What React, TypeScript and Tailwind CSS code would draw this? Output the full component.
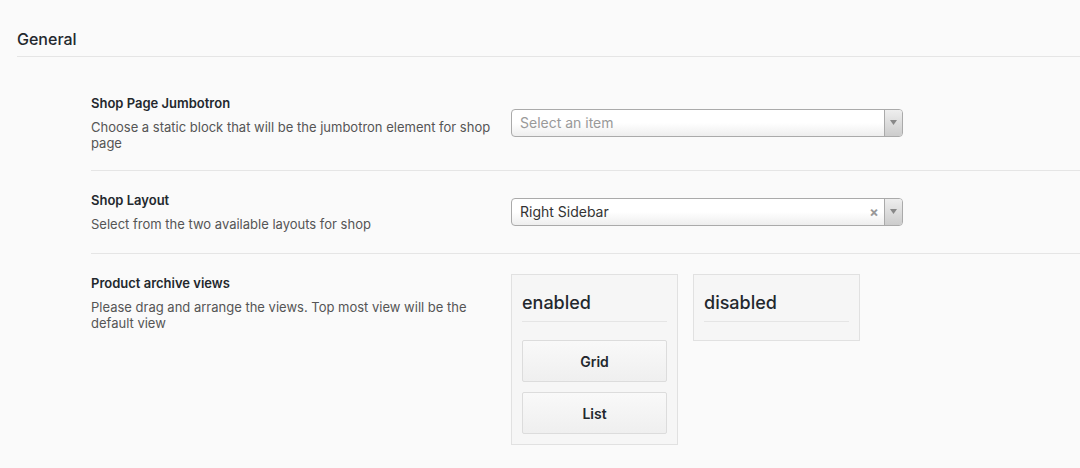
import { ReactNode } from 'react';

const font = { fontFamily: 'Inter, "Liberation Sans", Arial, sans-serif' };

function Caret() {
  return (
    <span className="flex w-[18px] items-center justify-center self-stretch rounded-r-[3px] border-l border-[#aaa] bg-gradient-to-b from-[#eee] to-[#ccc]">
      <svg width="7" height="5" viewBox="0 0 7 5">
        <path d="M0 0h7L3.5 5z" fill="#888" />
      </svg>
    </span>
  );
}

function Select({ value, placeholder }: { value?: string; placeholder?: string }) {
  return (
    <div className="flex h-[28px] w-[392px] items-stretch rounded-[4px] border border-[#aaa] bg-gradient-to-b from-white from-50% to-[#eee]">
      <span
        className={`flex flex-1 items-center pl-[8px] text-[14px] ${
          value ? 'text-[#333]' : 'text-[#999]'
        }`}
      >
        {value ?? placeholder}
      </span>
      {value && (
        <span className="flex w-[20px] items-center justify-center text-[14px] font-bold text-[#999]">
          ×
        </span>
      )}
      <Caret />
    </div>
  );
}

function Row({
  title,
  desc,
  children,
  first,
  top = false,
}: {
  title: string;
  desc: ReactNode;
  children: ReactNode;
  first?: boolean;
  top?: boolean;
}) {
  return (
    <div
      className={`flex ${first ? 'pt-[37px] pb-[19px]' : 'pt-[20px] pb-[21px]'} ${
        top ? 'items-start' : 'items-center border-b border-[#e5e5e5]'
      }`}
    >
      <div className="w-[420px] shrink-0 pr-[15px]">
        <div className="text-[13px] font-semibold leading-[18px] text-[#23282d]">{title}</div>
        <div className="mt-[7px] text-[13px] leading-[16px] text-[#555]">{desc}</div>
      </div>
      {children}
    </div>
  );
}

function Column({ label, items }: { label: string; items: string[] }) {
  return (
    <div className="w-[167px] border border-[#e1e1e1] bg-[#f6f6f6] px-[10px] pt-[15px]">
      <div className="border-b border-[#e5e5e5] pb-[5px] text-[18px] font-medium leading-[26px] text-[#23282d]">
        {label}
      </div>
      <div className="mt-[18px]">
        {items.map((it) => (
          <div
            key={it}
            className="mb-[10px] flex h-[42px] items-center justify-center rounded-[2px] border border-[#dcdcdc] bg-gradient-to-b from-[#f9f9f9] to-[#efefef] text-[14px] font-semibold text-[#23282d]"
          >
            {it}
          </div>
        ))}
      </div>
    </div>
  );
}

export default function App() {
  return (
    <div className="h-[468px] w-[1080px] overflow-hidden bg-[#fafafa]" style={font}>
      <div className="pl-[17px]">
        <div className="border-b border-[#e5e5e5] pt-[29px] pb-[7px] text-[16px] font-medium leading-[20px] text-[#23282d]">
          General
        </div>
        <div className="pl-[74px]">
          <Row
            first
            title="Shop Page Jumbotron"
            desc="Choose a static block that will be the jumbotron element for shop page"
          >
            <Select placeholder="Select an item" />
          </Row>
          <Row title="Shop Layout" desc="Select from the two available layouts for shop">
            <Select value="Right Sidebar" />
          </Row>
          <Row
            top
            title="Product archive views"
            desc="Please drag and arrange the views. Top most view will be the default view"
          >
            <div className="flex items-start gap-[15px]">
              <Column label="enabled" items={['Grid', 'List']} />
              <Column label="disabled" items={[]} />
            </div>
          </Row>
        </div>
      </div>
    </div>
  );
}
